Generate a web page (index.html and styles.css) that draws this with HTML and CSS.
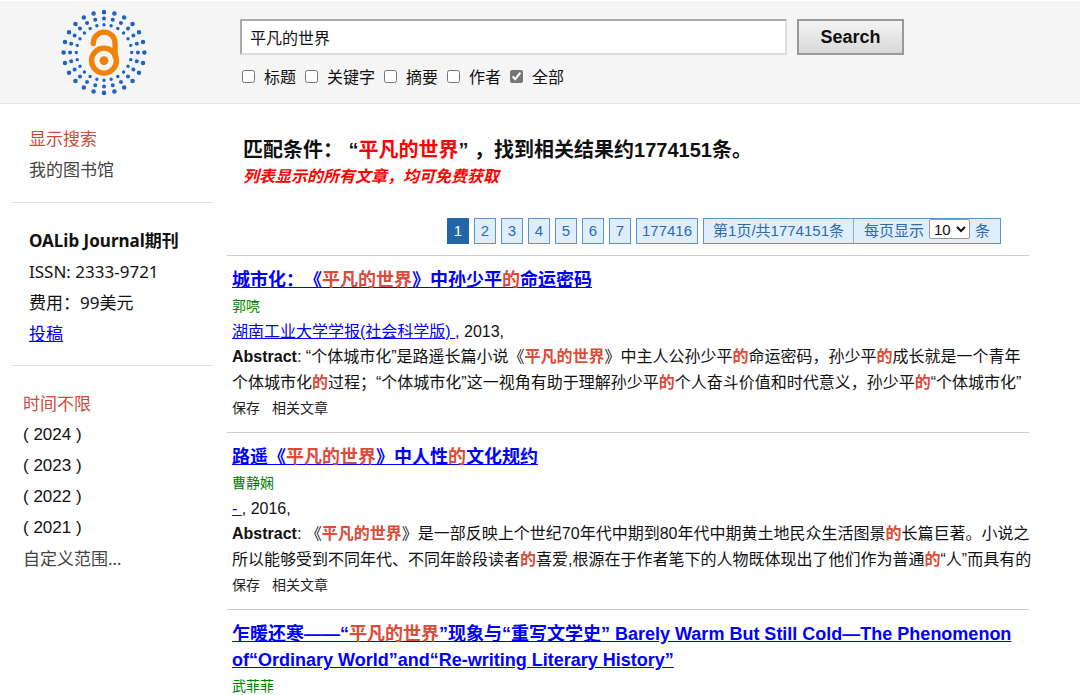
FILE: index.html
```html
<!DOCTYPE html>
<html lang="zh-CN">
<head>
<meta charset="utf-8">
<meta name="viewport" content="width=device-width, initial-scale=1">
<title>OALib - 平凡的世界</title>
<link rel="stylesheet" href="styles.css">
</head>
<body>
<header class="header">
  <svg class="logo" viewBox="-48 -48 96 96" role="img" aria-label="OALib">
    <g fill="none" stroke="#1f63c0" stroke-linecap="round" stroke-dasharray="0 1">
      <circle r="40.8" pathLength="24" stroke-width="4.6"/>
      <circle r="34.3" pathLength="24" stroke-width="4.1"/>
      <circle r="28" pathLength="24" stroke-width="3.5"/>
    </g>
    <g fill="none" stroke="#f08307" stroke-width="5.4">
      <path d="M-10.8 -9V-9.6A11 11 0 0 1 11.2 -9.6V4" stroke-linecap="round"/>
      <circle cy="8.2" r="12.6"/>
    </g>
    <circle cy="8.2" r="4.5" fill="#f08307"/>
  </svg>
  <form class="search">
    <div class="search-row">
      <input class="search-input" type="text" aria-label="搜索" value="平凡的世界">
      <button class="search-button" type="button">Search</button>
    </div>
    <div class="filters">
      <input type="checkbox" id="f-title"><label for="f-title">标题</label>
      <input type="checkbox" id="f-keyword"><label for="f-keyword">关键字</label>
      <input type="checkbox" id="f-abstract"><label for="f-abstract">摘要</label>
      <input type="checkbox" id="f-author"><label for="f-author">作者</label>
      <input type="checkbox" id="f-all" checked><label for="f-all">全部</label>
    </div>
  </form>
</header>
<div class="page">
  <aside class="sidebar">
    <section class="side-block">
      <a class="side-link active" href="#">显示搜索</a>
      <a class="side-link" href="#">我的图书馆</a>
    </section>
    <section class="side-block">
      <strong>OALib Journal期刊</strong>
      <span>ISSN: 2333-9721</span>
      <span>费用：99美元</span>
      <a class="submit" href="#">投稿</a>
    </section>
    <section class="side-block years">
      <a class="side-link active" href="#">时间不限</a>
      <a class="year" href="#">( 2024 )</a>
      <a class="year" href="#">( 2023 )</a>
      <a class="year" href="#">( 2022 )</a>
      <a class="year" href="#">( 2021 )</a>
      <a class="side-link" href="#">自定义范围…</a>
    </section>
  </aside>
  <main class="main">
    <div class="summary">
      <h1>匹配条件： “<span>平凡的世界</span>” ，找到相关结果约1774151条。</h1>
      <p>列表显示的所有文章，均可免费获取</p>
    </div>
    <nav class="pager" aria-label="分页">
      <a class="page-link current" href="#">1</a>
      <a class="page-link" href="#">2</a>
      <a class="page-link" href="#">3</a>
      <a class="page-link" href="#">4</a>
      <a class="page-link" href="#">5</a>
      <a class="page-link" href="#">6</a>
      <a class="page-link" href="#">7</a>
      <a class="page-link" href="#">177416</a>
      <div class="page-info">
        <span class="page-count">第1页/共1774151条</span>
        <div class="page-size"><label for="size">每页显示</label><select id="size"><option>10</option><option>20</option></select><span>条</span></div>
      </div>
    </nav>
    <article class="result">
      <h2><a href="#">城市化：《<em>平凡的世界</em>》中孙少平<em>的</em>命运密码</a></h2>
      <p class="author">郭喨</p>
      <p class="venue"><a href="#">湖南工业大学学报(社会科学版) </a>, 2013,</p>
      <p class="abstract"><b>Abstract</b>: “个体城市化”是路遥长篇小说《<em>平凡的世界</em>》中主人公孙少平<em>的</em>命运密码，孙少平<em>的</em>成长就是一个青年<br>个体城市化<em>的</em>过程；“个体城市化”这一视角有助于理解孙少平<em>的</em>个人奋斗价值和时代意义，孙少平<em>的</em>“个体城市化”</p>
      <p class="actions"><a href="#">保存</a><a href="#">相关文章</a></p>
    </article>
    <article class="result">
      <h2><a href="#">路遥《<em>平凡的世界</em>》中人性<em>的</em>文化规约</a></h2>
      <p class="author">曹静娴</p>
      <p class="venue"><a href="#">- </a>, 2016,</p>
      <p class="abstract"><b>Abstract</b>: 《<em>平凡的世界</em>》是一部反映上个世纪70年代中期到80年代中期黄土地民众生活图景<em>的</em>长篇巨著。小说之<br>所以能够受到不同年代、不同年龄段读者<em>的</em>喜爱,根源在于作者笔下的人物既体现出了他们作为普通<em>的</em>“人”而具有的</p>
      <p class="actions"><a href="#">保存</a><a href="#">相关文章</a></p>
    </article>
    <article class="result">
      <h2><a href="#">乍暖还寒——“<em>平凡的世界</em>”现象与“重写文学史” Barely Warm But Still Cold—The Phenomenon of“Ordinary World”and“Re-writing Literary History”</a></h2>
      <p class="author">武菲菲</p>
    </article>
  </main>
</div>
</body>
</html>
```

FILE: styles.css
```css
* { box-sizing: border-box; }

body {
  margin: 0;
  overflow: hidden;
  background: #fff;
  color: #111;
  font: 16px/26px "Liberation Sans", "Noto Sans CJK SC", sans-serif;
  text-spacing-trim: space-all;
}

h1, h2, p { margin: 0; }

.header {
  display: flex;
  align-items: flex-start;
  gap: 88px;
  padding: 4px 0 3px 56px;
  border-top: 1px solid #fff;
  border-bottom: 1px solid #e4e4e4;
  background: #f5f5f5;
}

.logo { flex: none; width: 96px; height: 95px; }

.search { flex: 1; padding: 14px 176px 0 0; }

.search-row { display: flex; gap: 10px; }

.search-input {
  flex: 1;
  min-width: 0;
  height: 36px;
  padding: 0 8px;
  border: 2px solid #aaa;
  border-right-color: #ddd;
  border-bottom-color: #ddd;
  background: #fff;
  color: #111;
  font: inherit;
}

.search-button {
  width: 107px;
  height: 36px;
  border: 2px solid #999;
  background: linear-gradient(#f4f4f4, #d8d8d8);
  color: #111;
  font: bold 18px "Liberation Sans", sans-serif;
}

.filters { display: flex; align-items: center; gap: 9px; margin-top: 10px; padding-left: 2px; }

.filters input { width: 13px; height: 13px; margin: 0 0 3px; accent-color: #767676; }

.page {
  display: grid;
  grid-template-columns: 201px 1fr;
  gap: 14px;
  padding: 0 51px 0 12px;
}

.main { min-width: 0; }

.sidebar { font: 17px/31px "Noto Sans", "Noto Sans CJK SC", sans-serif; }

.side-block {
  display: flex;
  flex-direction: column;
  align-items: flex-start;
  padding: 22px 17px 16px;
  border-bottom: 1px solid #ddd;
}

.side-block:first-child { padding-top: 19px; padding-bottom: 17px; }
.side-block.years { padding-left: 11px; border-bottom: 0; }

.side-link { color: #444; text-decoration: none; }
.side-link.active { color: #d14836; }
.submit { color: #00f; }
.year { color: #111; font-family: "Liberation Sans", sans-serif; text-decoration: none; }

.summary { padding: 32px 16px 0; }
.summary h1 { font-size: 20px; line-height: 28px; }
.summary h1 span { color: #f00; }
.summary p { color: #f00; font-style: italic; font-weight: bold; }

.pager {
  display: flex;
  justify-content: flex-end;
  gap: 5px;
  padding: 28px 28px 11px 0;
  border-bottom: 1px solid #ccc;
  color: #2e6ba8;
  font-size: 15px;
  line-height: 24px;
}

.page-link, .page-info { border: 1px solid #5b96cb; background: #dfeeff; }
.page-link { min-width: 22px; padding: 0 5px; color: inherit; text-align: center; text-decoration: none; }
.page-link.current { border-color: #2266aa; background: #2266aa; color: #fff; }

.page-info { display: flex; white-space: nowrap; }
.page-count { padding: 0 9px; border-right: 1px solid #7fb0df; }
.page-size { display: flex; gap: 5px; padding: 0 10px; }
.page-size select {
  width: 41px;
  height: 20px;
  border: 1px solid #999;
  border-radius: 2px;
  background: #fff;
  color: #111;
  font: 15px "Liberation Sans", sans-serif;
}

.result { padding: 11px 5px; border-bottom: 1px solid #ccc; }
.result h2 { font-size: 18px; }
.result h2 a, .venue a { color: #00f; }
.result em { color: #dd4b39; font-style: normal; font-weight: bold; }
.author { color: #008000; font-size: 14px; }
.venue { line-height: 25px; }
.abstract { white-space: nowrap; }
.actions { display: flex; gap: 12px; font-size: 14px; line-height: 25px; }
.actions a { color: #222; text-decoration: none; }
```
